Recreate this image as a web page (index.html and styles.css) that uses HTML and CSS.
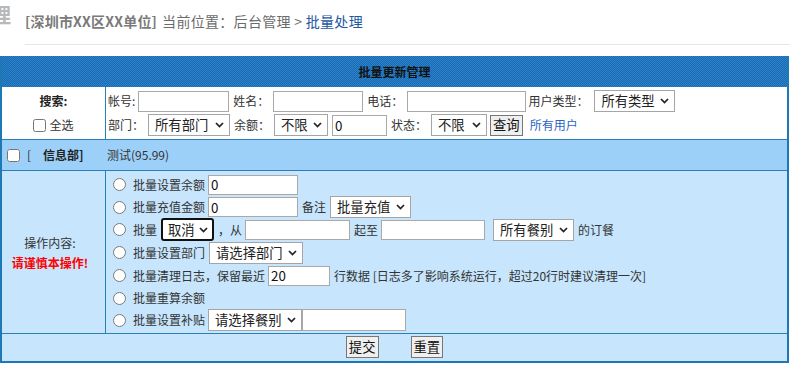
FILE: index.html
```html
<!DOCTYPE html>
<html lang="zh-CN">
<head>
<meta charset="utf-8">
<title>批量更新管理</title>
<link rel="stylesheet" href="styles.css">
</head>
<body>
<div class="top">
  <div class="cut"><span>理</span></div>
  <div class="crumb">
    <b class="unit">[深圳市XX区XX单位]</b>
    <span class="pos">当前位置：后台管理 &gt; <a class="here" href="#">批量处理</a></span>
  </div>
</div>
<form class="panel">
  <div class="head">批量更新管理</div>
  <div class="search">
    <div class="lcell">
      <div class="line"><b class="strong">搜索:</b></div>
      <div class="line"><label class="chk"><input type="checkbox">全选</label></div>
    </div>
    <div class="rcell">
      <div class="line">
        <span>帐号:</span><input class="txt w91 first" type="text">
        <span>姓名：</span><input class="txt w90" type="text">
        <span>电话：</span><input class="txt w119" type="text">
        <span class="utype">用户类型：</span><span class="sel"><select class="s81"><option>所有类型</option></select><svg viewBox="0 0 9 6"><polyline points="1,1 4.5,4.6 8,1"/></svg></span>
      </div>
      <div class="line">
        <span>部门：</span><span class="sel"><select class="s82"><option>所有部门</option></select><svg viewBox="0 0 9 6"><polyline points="1,1 4.5,4.6 8,1"/></svg></span>
        <span>余额：</span><span class="sel"><select class="s54"><option>不限</option></select><svg viewBox="0 0 9 6"><polyline points="1,1 4.5,4.6 8,1"/></svg></span><input class="txt w55 tight" type="text" value="0">
        <span>状态：</span><span class="sel"><select class="s56"><option>不限</option></select><svg viewBox="0 0 9 6"><polyline points="1,1 4.5,4.6 8,1"/></svg></span><button class="btn q" type="button">查询</button><a class="all" href="#">所有用户</a>
      </div>
    </div>
  </div>
  <div class="dept">
    <div class="who"><input type="checkbox"><span class="br">[</span><b class="strong">信息部]</b></div>
    <div class="bal">测试(95.99)</div>
  </div>
  <div class="ops">
    <div class="lcell">
      <div class="oplabel">操作内容:</div>
      <div class="warn">请谨慎本操作!</div>
    </div>
    <div class="rcell">
      <div class="line h23"><input type="radio" name="op"><span>批量设置余额</span><input class="txt s w90" type="text" value="0"></div>
      <div class="line h22"><input type="radio" name="op"><span>批量充值金额</span><input class="txt s w90" type="text" value="0"><span>备注</span><span class="sel"><select class="s81"><option>批量充值</option></select><svg viewBox="0 0 9 6"><polyline points="1,1 4.5,4.6 8,1"/></svg></span></div>
      <div class="line h23"><input type="radio" name="op"><span>批量</span><span class="sel focus"><select class="s53"><option>取消</option></select><svg viewBox="0 0 9 6"><polyline points="1,1 4.5,4.6 8,1"/></svg></span><span>，从</span><input class="txt s w105" type="text"><span>起至</span><input class="txt s w104" type="text"><span class="sel"><select class="s81"><option>所有餐别</option></select><svg viewBox="0 0 9 6"><polyline points="1,1 4.5,4.6 8,1"/></svg></span><span>的订餐</span></div>
      <div class="line h23"><input type="radio" name="op"><span>批量设置部门</span><span class="sel"><select class="s94 sm"><option>请选择部门</option></select><svg viewBox="0 0 9 6"><polyline points="1,1 4.5,4.6 8,1"/></svg></span></div>
      <div class="line h23"><input type="radio" name="op"><span>批量清理日志，保留最近</span><input class="txt s w62" type="text" value="20"><span>行数据 [日志多了影响系统运行，超过20行时建议清理一次]</span></div>
      <div class="line h22"><input type="radio" name="op"><span>批量重算余额</span></div>
      <div class="line h22"><input type="radio" name="op"><span>批量设置补贴</span><span class="sel flush"><select class="s94 sm"><option>请选择餐别</option></select><svg viewBox="0 0 9 6"><polyline points="1,1 4.5,4.6 8,1"/></svg></span><input class="txt sm2 w104 tight" type="text"></div>
    </div>
  </div>
  <div class="foot">
    <button class="btn" type="button">提交</button>
    <button class="btn" type="button">重置</button>
  </div>
</form>
</body>
</html>
```

FILE: styles.css
```css
* { box-sizing: border-box; }
html, body { margin: 0; padding: 0; background: #fff; }
body {
  width: 790px;
  height: 365px;
  overflow: hidden;
  font-family: "Noto Sans CJK SC", "Noto Sans", sans-serif;
  font-size: 12px;
  line-height: 16px;
  color: #333;
}

/* top breadcrumb */
.top { display: flex; height: 45px; margin-bottom: 11px; }
.cut { width: 11px; overflow: hidden; display: flex; justify-content: flex-end; flex: none; }
.cut span { flex: none; font-size: 20px; line-height: 30px; font-weight: bold; color: #b9b9b9; }
.crumb {
  flex: 1;
  margin-left: 14px;
  border-bottom: 1px solid #e6e6e6;
  display: flex;
  align-items: center;
  padding-bottom: 2px;
  font-size: 14px;
  color: #6b6b6b;
  white-space: nowrap;
}
.unit { color: #7a7a7a; font-weight: bold; margin-right: 5px; letter-spacing: 0.2px; }
.pos { letter-spacing: 0.3px; }
.here { color: #22579f; text-decoration: none; }

/* panel */
.panel { width: 789px; border: 2px solid #1e78b4; border-top: 0; margin: 0; }
.head {
  height: 31px;
  line-height: 31px;
  text-align: center;
  font-weight: bold;
  color: #111;
  background-color: #2174bc;
  background-image: conic-gradient(#1b6bb3 25%, #2b82ca 0 50%, #1b6bb3 0 75%, #2b82ca 0);
  background-size: 2px 2px;
}
.strong { font-weight: bold; color: #222; }

.search { display: flex; height: 53px; background: #fff; border-bottom: 1px solid #2a7fb8; }
.lcell { width: 104px; flex: none; border-right: 1px solid #2a7fb8; }
.search .lcell { padding: 2px 0; }
.rcell { flex: 1; padding: 2px 0 2px 2px; }
.line { height: 24px; display: flex; align-items: center; white-space: nowrap; }
.lcell .line { justify-content: center; }
.line.h23 { height: 23px; }
.line.h22 { height: 22px; }

.chk { display: flex; align-items: center; }
input[type="checkbox"] { width: 13px; height: 13px; margin: 0 3px 0 0; }
input[type="radio"] { width: 13px; height: 13px; margin: 0 7px 0 5px; flex: none; }

.txt {
  height: 21px;
  margin: 0 4px;
  padding: 0 2px;
  border: 1px solid #a9a9a9;
  border-radius: 0;
  background: #fff;
  font-family: inherit;
  font-size: 13.33px;
  color: #111;
  outline: none;
}
.txt.first { margin-left: 3px; }
.txt.s { height: 20px; margin-left: 3px; }
.txt.sm2 { height: 22px; }
.txt.tight { margin-left: 0; }
.w55 { width: 55px; } .w62 { width: 62px; } .w90 { width: 90px; } .w91 { width: 91px; }
.w104 { width: 104px; } .w105 { width: 105px; } .w119 { width: 119px; }
.utype { margin-left: -2px; margin-right: 2px; }

.sel { position: relative; display: inline-flex; margin: 0 4px; flex: none; }
.sel.flush { margin: 0 0 0 3px; }
.sel select {
  -webkit-appearance: none;
  appearance: none;
  height: 22px;
  margin: 0;
  padding: 0 16px 0 6px;
  border: 1px solid #a5a5a5;
  border-radius: 0;
  background: #fff;
  font-family: inherit;
  font-size: 13.33px;
  line-height: 20px;
  color: #222;
  outline: none;
}
.sel select.sm { height: 22px; }
.sel.focus select { border: 2px solid #111; border-radius: 3px; padding-left: 5px; height: 23px; }
.sel svg {
  position: absolute;
  right: 6px;
  top: 50%;
  width: 9px;
  height: 6px;
  margin-top: -3px;
  fill: none;
  stroke: #222;
  stroke-width: 1.7;
  pointer-events: none;
}
.s53 { width: 53px; } .s54 { width: 54px; } .s56 { width: 56px; }
.s81 { width: 81px; } .s82 { width: 82px; } .s94 { width: 94px; }

.btn {
  height: 22px;
  padding: 0 2px;
  margin: 0;
  border: 1px solid #767676;
  border-radius: 0;
  background: #efefef;
  font-family: inherit;
  font-size: 13.33px;
  line-height: 18px;
  color: #111;
}
.btn.q { height: 21px; margin-left: -1px; }
.all { margin-left: 7px; color: #2a63c4; text-decoration: none; }

/* department row */
.dept { display: flex; align-items: center; height: 31px; background: #9dd0f9; border-bottom: 1px solid #2a7fb8; }
.who { width: 104px; flex: none; display: flex; align-items: center; }
.who input[type="checkbox"] { margin: 0 0 0 5px; }
.br { margin-left: 7px; margin-right: 12px; }
.bal { padding-left: 1px; }

/* operations */
.ops { display: flex; height: 163px; background: #c7e6fd; border-bottom: 1px solid #2a7fb8; }
.ops .lcell {
  display: flex;
  flex-direction: column;
  justify-content: center;
  align-items: center;
  padding: 2px 7px 0 0;
  line-height: 20px;
}
.warn { color: #f00; font-weight: bold; }

.foot { height: 27px; display: flex; justify-content: center; align-items: center; gap: 32px; background: #c7e6fd; padding-bottom: 1px; }
```
